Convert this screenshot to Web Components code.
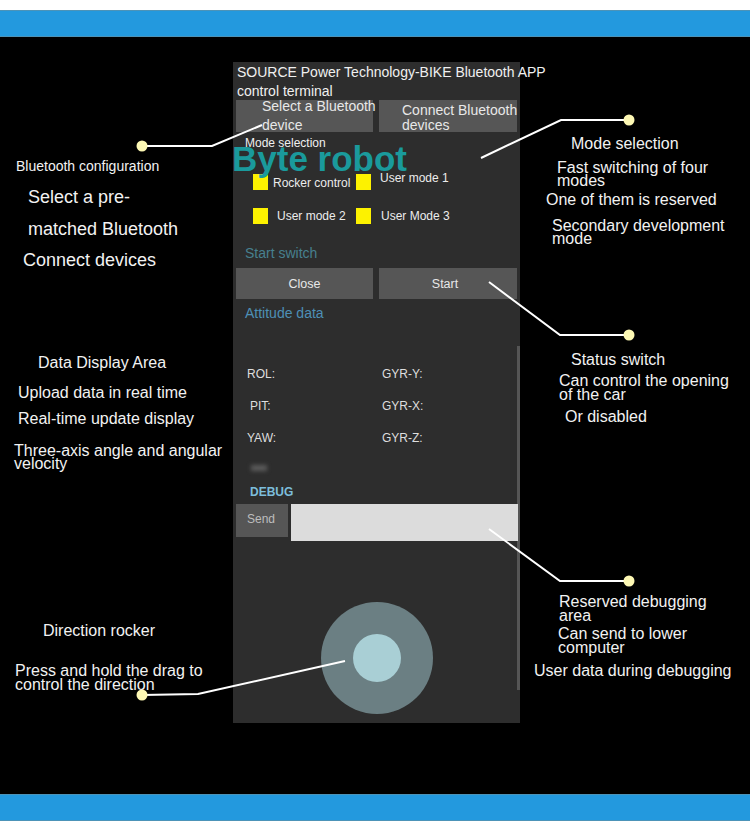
<!DOCTYPE html>
<html lang="en">
<head>
<meta charset="utf-8">
<title>Byte robot</title>
<style>
  html, body { margin: 0; padding: 0; background: #fff; }
  body { font-family: "Liberation Sans", Arial, sans-serif; }
</style>
</head>
<body>
<page-stage>
  <ble-panel></ble-panel>

  <call-label x="16" y="165" size="14">Bluetooth configuration</call-label>
  <call-label x="28" y="196" size="18">Select a pre-</call-label>
  <call-label x="28" y="228" size="18">matched Bluetooth</call-label>
  <call-label x="23" y="259" size="18">Connect devices</call-label>

  <call-label x="38" y="362" size="16">Data Display Area</call-label>
  <call-label x="18" y="392" size="16">Upload data in real time</call-label>
  <call-label x="18" y="418" size="16">Real-time update display</call-label>
  <call-label x="14" y="450" size="16">Three-axis angle and angular</call-label>
  <call-label x="14" y="463" size="16">velocity</call-label>

  <call-label x="43" y="630" size="16">Direction rocker</call-label>
  <call-label x="15" y="670" size="16">Press and hold the drag to</call-label>
  <call-label x="15" y="684" size="16">control the direction</call-label>

  <call-label x="571" y="143" size="16">Mode selection</call-label>
  <call-label x="557" y="167" size="16">Fast switching of four</call-label>
  <call-label x="557" y="180" size="16">modes</call-label>
  <call-label x="546" y="199" size="16">One of them is reserved</call-label>
  <call-label x="552" y="225" size="16">Secondary development</call-label>
  <call-label x="552" y="238" size="16">mode</call-label>

  <call-label x="571" y="359" size="16">Status switch</call-label>
  <call-label x="559" y="380" size="16">Can control the opening</call-label>
  <call-label x="559" y="394" size="16">of the car</call-label>
  <call-label x="565" y="416" size="16">Or disabled</call-label>

  <call-label x="559" y="601" size="16">Reserved debugging</call-label>
  <call-label x="559" y="615" size="16">area</call-label>
  <call-label x="558" y="633" size="16">Can send to lower</call-label>
  <call-label x="558" y="647" size="16">computer</call-label>
  <call-label x="534" y="670" size="16">User data during debugging</call-label>

  <leader-lines></leader-lines>
</page-stage>

<script>
// top of the black area, labels are given in page coordinates
const CANVAS_TOP = 37;

class PageStage extends HTMLElement {
  constructor() {
    super();
    this.attachShadow({ mode: 'open' });
  }

  connectedCallback() {
    this.shadowRoot.innerHTML = `
      <style>
        :host {
          display: flex;
          flex-direction: column;
          width: 750px;
          height: 838px;
          overflow: hidden;
          background: #fff;
        }
        .bar {
          flex: none;
          height: 27px;
          background: #2399de;
          box-shadow: inset 0 1px 0 #4c93b8, inset 0 -1px 0 #4c93b8;
        }
        .top { margin-top: 10px; }
        .canvas {
          flex: none;
          position: relative;
          height: 757px;
          background: #000;
        }
      </style>
      <div class="bar top"></div>
      <div class="canvas"><slot></slot></div>
      <div class="bar"></div>
    `;
  }
}

class CallLabel extends HTMLElement {
  constructor() {
    super();
    this.attachShadow({ mode: 'open' });
  }

  connectedCallback() {
    const size = Number(this.getAttribute('size'));
    const x = Number(this.getAttribute('x'));
    const y = Number(this.getAttribute('y'));
    this.shadowRoot.innerHTML = `
      <style>
        :host {
          display: block;
          position: absolute;
          left: ${x}px;
          top: ${y - CANVAS_TOP - 5}px;
          height: 12px;
          line-height: 12px;
          white-space: nowrap;
          font-size: ${size}px;
          color: #f2f2f2;
        }
      </style>
      <slot></slot>
    `;
  }
}

class LeaderLines extends HTMLElement {
  constructor() {
    super();
    this.attachShadow({ mode: 'open' });
  }

  connectedCallback() {
    const lines = [
      '142,146 212,146 262,125',
      '629,120 561,120 481,158',
      '629,335 560,335 489,282',
      '629,581 560,581 489,529',
      '142,695 198,694 345,661'
    ];
    const dibujo = lines.map((pts) => {
      const [x, y] = pts.split(' ')[0].split(',');
      return `<polyline points="${pts}" fill="none" stroke="#fff" stroke-width="2"/>
        <circle cx="${x}" cy="${y}" r="5.5" fill="#fdf8b4"/>`;
    }).join('');
    this.shadowRoot.innerHTML = `
      <style>
        :host { display: block; position: absolute; left: 0; top: 0; pointer-events: none; }
        svg { display: block; }
      </style>
      <svg width="750" height="757" viewBox="0 ${CANVAS_TOP} 750 757">${dibujo}</svg>
    `;
  }
}

class PanelButton extends HTMLElement {
  constructor() {
    super();
    this.attachShadow({ mode: 'open' });
  }

  connectedCallback() {
    this.shadowRoot.innerHTML = `
      <style>
        :host {
          display: flex;
          align-items: center;
          justify-content: center;
          box-sizing: border-box;
          background: #565656;
          color: #e8e8e8;
          font-size: 12.5px;
          white-space: nowrap;
        }
      </style>
      <slot></slot>
    `;
  }
}

class ModeCheck extends HTMLElement {
  constructor() {
    super();
    this.attachShadow({ mode: 'open' });
  }

  connectedCallback() {
    this.shadowRoot.innerHTML = `
      <style>
        :host {
          display: flex;
          align-items: flex-start;
          gap: var(--gap, 9px);
          height: 16px;
          font-size: 12px;
          line-height: 16px;
          color: #ececec;
          white-space: nowrap;
        }
        .box { flex: none; width: 15px; height: 16px; background: #fdf200; }
        .txt { margin-top: var(--lift, 0); }
      </style>
      <span class="box"></span><span class="txt"><slot></slot></span>
    `;
  }
}

class RockerPad extends HTMLElement {
  constructor() {
    super();
    this.attachShadow({ mode: 'open' });
  }

  connectedCallback() {
    this.shadowRoot.innerHTML = `
      <style>
        :host {
          display: flex;
          align-items: center;
          justify-content: center;
          width: 112px;
          height: 112px;
          border-radius: 50%;
          background: #6b7f83;
        }
        .knob { width: 48px; height: 48px; border-radius: 50%; background: #a9cfd5; }
      </style>
      <div class="knob"></div>
    `;
  }
}

class BlePanel extends HTMLElement {
  constructor() {
    super();
    this.attachShadow({ mode: 'open' });
  }

  connectedCallback() {
    this.render();
  }

  render() {
    this.shadowRoot.innerHTML = `
      <style>
        :host {
          display: block;
          position: absolute;
          left: 233px;
          top: 25px;
          width: 287px;
          height: 661px;
          box-sizing: border-box;
          padding: 0 3px;
          background: #2d2d2d;
          color: #ececec;
        }
        .title {
          height: 38px;
          padding: 1px 0 0 1px;
          box-sizing: border-box;
          font-size: 14px;
          line-height: 19px;
          white-space: nowrap;
          color: #f0f0f0;
        }
        .row { display: grid; grid-template-columns: 137px 138px; gap: 6px; }
        .row panel-button { height: 31px; }
        .row.first panel-button {
          height: 32px;
          justify-content: flex-start;
          font-size: 14px;
        }
        .left-text { line-height: 19px; }
        .right-text { line-height: 15px; padding-top: 4px; }
        .section {
          height: 16px;
          margin-left: 9px;
          font-size: 14px;
          line-height: 16px;
          white-space: nowrap;
        }
        .mode-title { margin-top: 3px; font-size: 12px; color: #f0f0f0; }
        .brand {
          position: absolute;
          left: -1px;
          top: 77px;
          font-size: 35px;
          line-height: 40px;
          font-weight: bold;
          color: #1a9a9c;
          white-space: nowrap;
        }
        .modes {
          display: grid;
          grid-template-columns: 103px 1fr;
          row-gap: 18px;
          margin: 23px 0 0 17px;
        }
        .switch-title { margin-top: 21px; color: #47808f; }
        .switch-row { margin-top: 7px; }
        .attitude { margin-top: 6px; color: #4d90b6; }
        .data {
          display: grid;
          grid-template-columns: 135px 1fr;
          grid-auto-rows: 32px;
          margin: 37px 0 0 11px;
          font-size: 12px;
          line-height: 32px;
          color: #dedede;
        }
        .pit { padding-left: 3px; }
        .smudge {
          width: 16px;
          height: 6px;
          margin: 11px 0 0 15px;
          background: #5c5c5c;
          filter: blur(2px);
        }
        .debug {
          margin: 13px 0 0 14px;
          height: 16px;
          font-size: 12px;
          line-height: 16px;
          font-weight: bold;
          color: #7cbddb;
        }
        .send-row { position: relative; display: flex; align-items: flex-start; gap: 3px; margin-top: 4px; }
        .send-row panel-button { flex: none; width: 52px; height: 33px; color: #bdbdbd; font-size: 12px; padding-bottom: 3px; padding-right: 2px; }
        .input { flex: none; width: 227px; height: 37px; background: #dcdcdc; }
        rocker-pad { margin: 61px 0 0 85px; }
        .scroll {
          position: absolute;
          right: 0;
          top: 284px;
          width: 3px;
          height: 344px;
          background: #555;
        }
      </style>
      <div class="title">SOURCE Power Technology-BIKE Bluetooth APP<br>control terminal</div>
      <div class="row first">
        <panel-button style="padding-left:26px"><span class="left-text">Select a Bluetooth<br>device</span></panel-button>
        <panel-button style="padding-left:23px"><span class="right-text">Connect Bluetooth<br>devices</span></panel-button>
      </div>
      <div class="section mode-title">Mode selection</div>
      <div class="brand">Byte robot</div>
      <div class="modes">
        <mode-check style="--gap:5px;--lift:1px">Rocker control</mode-check>
        <mode-check style="--lift:-4px">User mode 1</mode-check>
        <mode-check>User mode 2</mode-check>
        <mode-check style="--gap:10px">User Mode 3</mode-check>
      </div>
      <div class="section switch-title">Start switch</div>
      <div class="row switch-row">
        <panel-button>Close</panel-button>
        <panel-button style="padding-right:6px">Start</panel-button>
      </div>
      <div class="section attitude">Attitude data</div>
      <div class="data">
        <span>ROL:</span><span>GYR-Y:</span>
        <span class="pit">PIT:</span><span>GYR-X:</span>
        <span>YAW:</span><span>GYR-Z:</span>
      </div>
      <div class="smudge"></div>
      <div class="debug">DEBUG</div>
      <div class="scroll"></div>
      <div class="send-row">
        <panel-button>Send</panel-button>
        <div class="input"></div>
      </div>
      <rocker-pad></rocker-pad>
    `;
  }
}

customElements.define('page-stage', PageStage);
customElements.define('call-label', CallLabel);
customElements.define('leader-lines', LeaderLines);
customElements.define('panel-button', PanelButton);
customElements.define('mode-check', ModeCheck);
customElements.define('rocker-pad', RockerPad);
customElements.define('ble-panel', BlePanel);
</script>
</body>
</html>
